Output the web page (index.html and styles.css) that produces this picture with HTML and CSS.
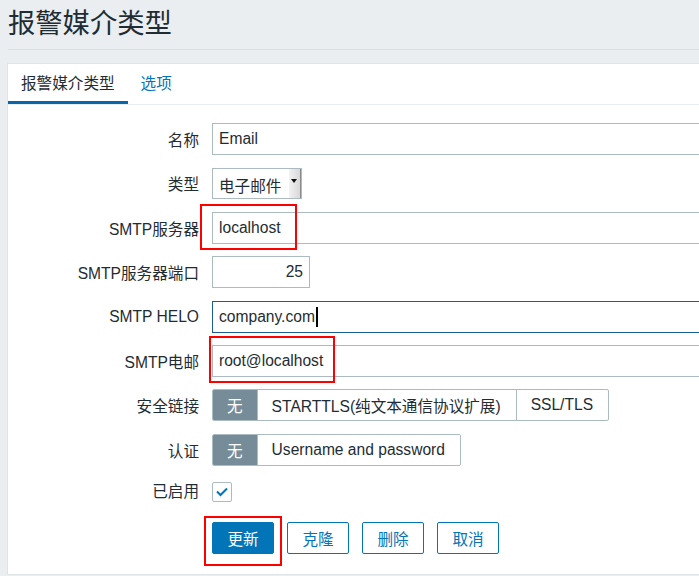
FILE: index.html
```html
<!DOCTYPE html>
<html lang="zh-CN">
<head>
<meta charset="utf-8">
<title>报警媒介类型</title>
<link rel="stylesheet" href="styles.css">
</head>
<body>
<header class="page-header">
  <h1 class="page-title">报警媒介类型</h1>
</header>
<main class="box">
  <nav class="tabs">
    <span class="tab tab-active">报警媒介类型</span>
    <span class="tab tab-link">选项</span>
  </nav>
  <form class="form">
    <label class="lbl">名称</label>
    <div class="ctl"><input class="inp inp-wide" type="text" value="Email"></div>

    <label class="lbl">类型</label>
    <div class="ctl">
      <div class="select"><span class="select-text">电子邮件</span><span class="select-btn"><span class="tri"></span></span></div>
    </div>

    <label class="lbl">SMTP服务器</label>
    <div class="ctl"><input class="inp inp-wide" type="text" value="localhost"><span class="mark mark-server"></span></div>

    <label class="lbl">SMTP服务器端口</label>
    <div class="ctl"><input class="inp inp-port" type="text" value="25"></div>

    <label class="lbl">SMTP HELO</label>
    <div class="ctl"><input class="inp inp-wide inp-focus" type="text" value="company.com"><span class="caret"></span></div>

    <label class="lbl">SMTP电邮</label>
    <div class="ctl"><input class="inp inp-wide" type="text" value="root@localhost"><span class="mark mark-email"></span></div>

    <label class="lbl">安全链接</label>
    <div class="ctl">
      <div class="seg">
        <span class="seg-item seg-on">无</span>
        <span class="seg-item">STARTTLS(纯文本通信协议扩展)</span>
        <span class="seg-item">SSL/TLS</span>
      </div>
    </div>

    <label class="lbl">认证</label>
    <div class="ctl">
      <div class="seg">
        <span class="seg-item seg-on">无</span>
        <span class="seg-item">Username and password</span>
      </div>
    </div>

    <label class="lbl lbl-check">已启用</label>
    <div class="ctl ctl-check">
      <span class="check"><svg width="14" height="10" viewBox="0 0 14 10"><path d="M2 4.5 L5.5 8 L12 1.5" fill="none" stroke="#0275b8" stroke-width="2"/></svg></span>
    </div>

    <span class="lbl"></span>
    <div class="ctl buttons">
      <span class="btn-wrap"><button type="button" class="btn btn-primary">更新</button><span class="mark mark-btn"></span></span>
      <button type="button" class="btn btn-alt">克隆</button>
      <button type="button" class="btn btn-alt">删除</button>
      <button type="button" class="btn btn-alt">取消</button>
    </div>
  </form>
</main>
</body>
</html>
```
FILE: styles.css
```css
html, body {
  margin: 0;
  padding: 0;
  overflow: hidden;
}
body {
  background: #ebeef1;
  font-family: "Liberation Sans", "Noto Sans CJK SC", Arial, sans-serif;
  font-size: 15.6px;
  color: #1f2c33;
  width: 699px;
  height: 576px;
}
.page-header {
  margin-left: 8px;
  padding-top: 5px;
  padding-bottom: 7px;
  border-bottom: 1px solid #dadee2;
}
.page-title {
  margin: 0;
  font-weight: normal;
  font-size: 27.3px;
  line-height: 37px;
  color: #1f2c33;
}
.box {
  margin-top: 13px;
  margin-left: 7px;
  width: 760px;
  background: #fff;
  border: 1px solid #dfe4e7;
  box-sizing: border-box;
}
.tabs {
  display: flex;
  height: 40px;
  border-bottom: 1px solid #ebeef1;
}
.tab {
  height: 40px;
  line-height: 40px;
  padding: 0 13px;
  margin-bottom: -1px;
  box-sizing: border-box;
}
.tab-active {
  box-shadow: inset 0 -3px 0 #0a66a9;
  color: #1f2c33;
}
.tab-link {
  color: #0275b8;
}
.form {
  display: grid;
  grid-template-columns: 191px 1fr;
  column-gap: 13px;
  row-gap: 12.4px;
  grid-auto-rows: 32px;
  padding: 18px 0 19px 0;
}
.lbl {
  display: flex;
  align-items: center;
  justify-content: flex-end;
  white-space: nowrap;
}
.ctl {
  position: relative;
  display: flex;
  align-items: center;
}
.inp {
  font: inherit;
  color: #1f2c33;
  height: 32px;
  box-sizing: border-box;
  border: 1px solid #acbbc2;
  padding: 0 6px;
  margin: 0;
  outline: none;
  background: #fff;
}
.inp-wide {
  width: 600px;
}
.inp-port {
  width: 98px;
  text-align: right;
}
.inp-focus {
  border-color: #1b5f8f;
}
.caret {
  position: absolute;
  left: 104px;
  top: 6px;
  width: 2px;
  height: 20px;
  background: #000;
}
.select {
  position: relative;
  width: 90px;
  height: 31px;
  box-sizing: border-box;
  border: 1px solid #acbbc2;
  background: #fff;
}
.select-text {
  position: absolute;
  left: 6px;
  top: 8px;
  line-height: 20px;
}
.select-btn {
  position: absolute;
  right: 0;
  top: 0;
  width: 12px;
  height: 29px;
  background: linear-gradient(to right, #f2f2f2, #d8d8d8);
  border-right: 1px solid #8a8a8a;
  box-sizing: border-box;
}
.tri {
  position: absolute;
  left: 2px;
  top: 10px;
  border-left: 3.5px solid transparent;
  border-right: 3.5px solid transparent;
  border-top: 4px solid #111;
}
.seg {
  display: flex;
  height: 32px;
  box-sizing: border-box;
  border: 1px solid #acbbc2;
  border-radius: 2px;
  overflow: hidden;
}
.seg-item {
  display: flex;
  align-items: center;
  padding: 0 15px 0 14px;
  border-left: 1px solid #acbbc2;
  white-space: nowrap;
}
.seg-item:first-child {
  border-left: none;
}
.seg-on {
  background: #768d99;
  color: #fff;
  padding: 0 14px 0 14px;
}
.lbl-check {
  align-items: flex-start;
  padding-top: 4px;
  line-height: 20px;
}
.ctl-check {
  align-items: flex-start;
}
.check {
  margin-top: 4px;
  width: 20px;
  height: 20px;
  box-sizing: border-box;
  border: 1px solid #acbbc2;
  border-radius: 2px;
  display: flex;
  align-items: center;
  justify-content: center;
}
.buttons {
  gap: 13px;
  margin-top: -2px;
}
.btn-wrap {
  position: relative;
  display: flex;
}
.btn {
  font: inherit;
  width: 62px;
  height: 32px;
  border-radius: 2px;
  box-sizing: border-box;
  margin: 0;
  padding: 0;
  cursor: pointer;
}
.btn-primary {
  background: #0275b8;
  border: 1px solid #0275b8;
  color: #fff;
}
.btn-alt {
  background: #fff;
  border: 1px solid #0275b8;
  color: #0275b8;
}
.mark {
  position: absolute;
  border: 2px solid #f00;
  box-sizing: border-box;
  pointer-events: none;
}
.mark-server {
  left: -12px;
  top: -8px;
  width: 97px;
  height: 46px;
}
.mark-email {
  left: -3px;
  top: -9px;
  width: 126px;
  height: 47px;
}
.mark-btn {
  left: -8px;
  top: -6px;
  width: 78px;
  height: 50px;
}
```
